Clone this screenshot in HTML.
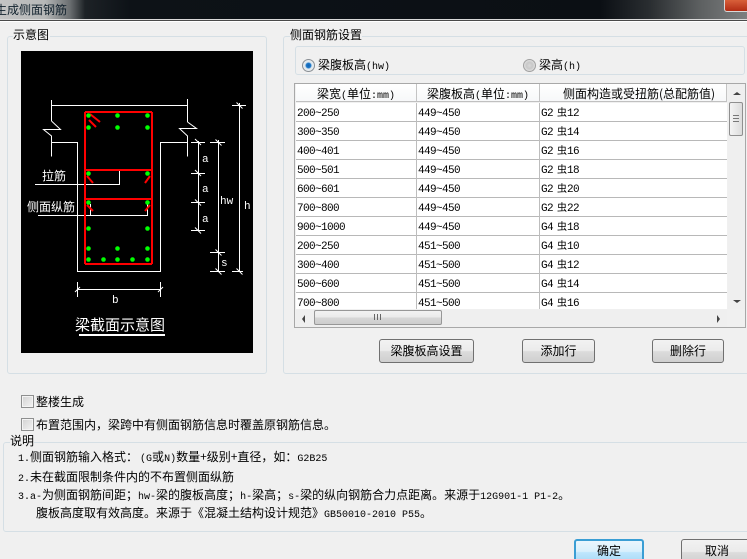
<!DOCTYPE html>
<html lang="zh">
<head>
<meta charset="utf-8">
<style>
html,body{margin:0;padding:0;width:747px;height:559px;overflow:hidden;}
body{position:relative;background:#f0f0f0;color:#000;
font:12px/14px "WenQuanYi Zen Hei","Noto Sans CJK SC",sans-serif;}
div,span{position:absolute;box-sizing:border-box;white-space:nowrap;}
.m{font-family:"Liberation Mono","WenQuanYi Zen Hei",monospace;font-size:10px;}
.g{border:1px solid #d5dfe5;border-radius:3px;}
.lab{background:#f0f0f0;height:14px;}
.h{top:84px;height:18px;line-height:19px;text-align:center;background:linear-gradient(#fff,#f7f8f9);border-right:1px solid #c4c4c4;border-bottom:1px solid #c0c0c0;}
.row{left:296px;width:431px;height:19px;border-bottom:1px solid #b8b8b8;background:#fff;font-size:11px;letter-spacing:-.6px;}
.c{top:3px;height:16px;line-height:16px;}
.c1{left:1px}.c2{left:122px}.c3{left:245px}
.y{position:static;font-size:10px;letter-spacing:0;margin-left:4px;margin-right:0;}
.v{top:0;width:1px;height:19px;background:#bdbdbd;}
.btn{border:1px solid #707070;border-radius:3px;text-align:center;line-height:21px;height:24px;background:linear-gradient(#f2f2f2 0,#ebebeb 48%,#dcdcdc 52%,#cfcfcf 100%);font-size:12px;}
.cb{width:13px;height:13px;border:1px solid #8e8f8f;background:linear-gradient(135deg,#d2d2d2,#f4f4f4);box-shadow:inset 0 0 0 1px #f4f4f4;}
svg text{font-family:"Liberation Mono",monospace;fill:#fff;}
</style>
</head>
<body>
<div style="left:0;top:0;width:747px;height:19px;background:linear-gradient(90deg,#c4c4c4 0,#b5b7b7 45px,#6a6e70 70px,#1d2226 85px,#0d1217 130px,#0b0f14 600px,#2a2e31 650px,#5d6061 700px,#7d7f80 747px);"></div>
<div style="left:-5px;top:2px;height:16px;line-height:16px;font-size:12px;color:#10202c;">生成侧面钢筋</div>
<div style="left:724px;top:0;width:23px;height:12px;background:linear-gradient(#d8603a,#b22c14);border:1px solid #d8d8d8;border-top:0;border-right:0;border-radius:0 0 0 3px;"></div>
<div style="left:0;top:19px;width:747px;height:1px;background:#d9d9d9;"></div>
<div style="left:0;top:20px;width:747px;height:1px;background:#4a4a4a;"></div>
<div style="left:0;top:21px;width:747px;height:1px;background:#fff;"></div>

<!-- left group -->
<div class="g" style="left:7px;top:36px;width:260px;height:338px;"></div>
<div class="lab" style="left:13px;top:28px;width:37px;">示意图</div>
<div style="left:21px;top:51px;width:232px;height:302px;background:#000;"></div>
<svg style="position:absolute;left:0;top:0" width="747" height="559" viewBox="0 0 747 559" shape-rendering="crispEdges">
<g fill="none" stroke="#fff" stroke-width="1">
<path d="M51.5 100V121"/><path d="M52 105.500H187.500"/><path d="M187.500 99V122"/>
<path shape-rendering="auto" d="M51.500 121L60.500 129.500H43.500L51.500 136V156.500"/>
<path shape-rendering="auto" d="M187.500 122L196.500 128.500H179.500L187.500 136V156.500"/>
<path d="M51.500 142.500H77.500V271.500H160.500V142.500H187.500"/>
<path d="M35 184.500H119.500V170"/>
<path d="M38 215.500H147.500V204"/><path d="M90.500 204V215"/>
<path d="M198.500 141V231"/>
<path d="M191 142.500H205M191 173.500H205M191 202.500H205M191 230.500H205"/>
<path d="M218.500 140V272"/><path d="M210 142.500H225M210 252.500H225M210 271.500H225"/>
<path d="M239.500 103V272"/><path d="M232 105.500H246M232 271.500H243"/>
<path d="M77.500 282V297M160.500 282V297M77 289.500H161"/>
<path shape-rendering="auto" d="M195 139L201 145M195 170L201 176M195 199.500L201 205.500M195 227.500L201 233.500M215.500 139.500L221.500 145.500M215.500 249.500L221.500 255.500M215.500 268.500L221.500 274.500M236.500 102.500L242.500 108.500M236.500 268.500L242.500 274.500M75 292L80 287M158 292L163 287"/>
</g>
<rect x="79" y="334" width="86" height="2" fill="#fff"/>
<g fill="none" stroke="#f00" stroke-width="2">
<path d="M85 112H152M85 112V264M152 112V264M85 264H152M85 170H152M85 199H152"/>
<path shape-rendering="auto" d="M90 114L100 122M89 120L96 127M87 176L93 183M150 176L145 183M87 205L93 211M150 205L145 211"/>
</g>
<g fill="#0f0" shape-rendering="auto">
<circle cx="88.500" cy="115.500" r="2.300"/><circle cx="117.500" cy="115.500" r="2.300"/><circle cx="147.500" cy="115.500" r="2.300"/>
<circle cx="88.500" cy="127.500" r="2.300"/><circle cx="117.500" cy="127.500" r="2.300"/><circle cx="147.500" cy="127.500" r="2.300"/>
<circle cx="88.500" cy="173.500" r="2.300"/><circle cx="147.500" cy="173.500" r="2.300"/>
<circle cx="88.500" cy="202.500" r="2.300"/><circle cx="147.500" cy="202.500" r="2.300"/>
<circle cx="88.500" cy="228.500" r="2.300"/><circle cx="147.500" cy="228.500" r="2.300"/>
<circle cx="88.500" cy="248.500" r="2.300"/><circle cx="117.500" cy="248.500" r="2.300"/><circle cx="147.500" cy="248.500" r="2.300"/>
<circle cx="88.500" cy="259.500" r="2.300"/><circle cx="103.500" cy="259.500" r="2.300"/><circle cx="117.500" cy="259.500" r="2.300"/><circle cx="132.500" cy="259.500" r="2.300"/><circle cx="147.500" cy="259.500" r="2.300"/>
</g>
<g font-size="11">
<text x="202" y="162">a</text><text x="202" y="192">a</text><text x="202" y="222">a</text>
<text x="220" y="204">hw</text><text x="244" y="209">h</text><text x="221" y="266">s</text><text x="112" y="303">b</text>
</g>
<g>
<text x="42" y="180" font-size="12" style="font-family:'WenQuanYi Zen Hei','Noto Sans CJK SC',sans-serif">拉筋</text>
<text x="27" y="211" font-size="12" style="font-family:'WenQuanYi Zen Hei','Noto Sans CJK SC',sans-serif">侧面纵筋</text>
<text x="75" y="330" font-size="15" style="font-family:'WenQuanYi Zen Hei','Noto Sans CJK SC',sans-serif">梁截面示意图</text>
</g>
</svg>

<!-- right group -->
<div class="g" style="left:283px;top:36px;width:470px;height:338px;"></div>
<div class="lab" style="left:290px;top:28px;width:72px;">侧面钢筋设置</div>
<div class="g" style="left:295px;top:46px;width:450px;height:29px;"></div>
<div style="left:302px;top:59px;width:13px;height:13px;border-radius:50%;border:1px solid #8a8f94;background:radial-gradient(circle,#1060b0 0,#1d78c8 30%,#dfe8ee 45%,#f0f0f0 100%);"></div>
<div style="left:318px;top:58px;">梁腹板高<span class="m" style="position:static;">(hw)</span></div>
<div style="left:523px;top:59px;width:13px;height:13px;border-radius:50%;border:1px solid #a0a0a0;background:radial-gradient(circle,#d8d8d8 0,#c8c8c8 40%,#f4f4f4 100%);"></div>
<div style="left:539px;top:58px;">梁高<span class="m" style="position:static;">(h)</span></div>

<div style="left:294px;top:83px;width:452px;height:245px;border:1px solid #a8a8a8;background:#f0f0f0;"></div>
<div class="h" style="left:296px;width:121px;">梁宽<span class="m" style="position:static;">(</span>单位<span class="m" style="position:static;">:mm)</span></div>
<div class="h" style="left:417px;width:123px;">梁腹板高<span class="m" style="position:static;">(</span>单位<span class="m" style="position:static;">:mm)</span></div>
<div class="h" style="left:540px;width:187px;text-align:left;padding-left:23px;">侧面构造或受扭筋(总配筋值)</div>

<div class="row m" style="top:103px;"><span class="c c1">200~250</span><span class="c c2">449~450</span><span class="c c3">G2<span class="y">虫</span>12</span><i class="v" style="position:absolute;left:120px"></i><i class="v" style="position:absolute;left:243px"></i></div>
<div class="row m" style="top:122px;"><span class="c c1">300~350</span><span class="c c2">449~450</span><span class="c c3">G2<span class="y">虫</span>14</span><i class="v" style="position:absolute;left:120px"></i><i class="v" style="position:absolute;left:243px"></i></div>
<div class="row m" style="top:141px;"><span class="c c1">400~401</span><span class="c c2">449~450</span><span class="c c3">G2<span class="y">虫</span>16</span><i class="v" style="position:absolute;left:120px"></i><i class="v" style="position:absolute;left:243px"></i></div>
<div class="row m" style="top:160px;"><span class="c c1">500~501</span><span class="c c2">449~450</span><span class="c c3">G2<span class="y">虫</span>18</span><i class="v" style="position:absolute;left:120px"></i><i class="v" style="position:absolute;left:243px"></i></div>
<div class="row m" style="top:179px;"><span class="c c1">600~601</span><span class="c c2">449~450</span><span class="c c3">G2<span class="y">虫</span>20</span><i class="v" style="position:absolute;left:120px"></i><i class="v" style="position:absolute;left:243px"></i></div>
<div class="row m" style="top:198px;"><span class="c c1">700~800</span><span class="c c2">449~450</span><span class="c c3">G2<span class="y">虫</span>22</span><i class="v" style="position:absolute;left:120px"></i><i class="v" style="position:absolute;left:243px"></i></div>
<div class="row m" style="top:217px;"><span class="c c1">900~1000</span><span class="c c2">449~450</span><span class="c c3">G4<span class="y">虫</span>18</span><i class="v" style="position:absolute;left:120px"></i><i class="v" style="position:absolute;left:243px"></i></div>
<div class="row m" style="top:236px;"><span class="c c1">200~250</span><span class="c c2">451~500</span><span class="c c3">G4<span class="y">虫</span>10</span><i class="v" style="position:absolute;left:120px"></i><i class="v" style="position:absolute;left:243px"></i></div>
<div class="row m" style="top:255px;"><span class="c c1">300~400</span><span class="c c2">451~500</span><span class="c c3">G4<span class="y">虫</span>12</span><i class="v" style="position:absolute;left:120px"></i><i class="v" style="position:absolute;left:243px"></i></div>
<div class="row m" style="top:274px;"><span class="c c1">500~600</span><span class="c c2">451~500</span><span class="c c3">G4<span class="y">虫</span>14</span><i class="v" style="position:absolute;left:120px"></i><i class="v" style="position:absolute;left:243px"></i></div>
<div class="row m" style="top:293px;height:16px;border-bottom:0;"><span class="c c1">700~800</span><span class="c c2">451~500</span><span class="c c3">G4<span class="y">虫</span>16</span><i class="v" style="position:absolute;left:120px;height:16px"></i><i class="v" style="position:absolute;left:243px;height:16px"></i></div>

<!-- vertical scrollbar -->
<div style="left:728px;top:84px;width:17px;height:225px;background:#efefef;"></div>
<div style="left:733px;top:92px;width:0;height:0;border:4px solid transparent;border-top:0;border-bottom:3px solid #444;"></div>
<div style="left:733px;top:300px;width:0;height:0;border:4px solid transparent;border-bottom:0;border-top:3px solid #444;"></div>
<div style="left:729px;top:102px;width:14px;height:34px;border:1px solid #8f8f8f;border-radius:2px;background:linear-gradient(90deg,#f4f4f4,#dcdcdc);"></div>
<div style="left:733px;top:115px;width:6px;height:7px;border-top:1px solid #777;border-bottom:1px solid #777;"></div>
<div style="left:733px;top:118px;width:6px;height:1px;background:#777;"></div>
<!-- horizontal scrollbar -->
<div style="left:296px;top:310px;width:431px;height:17px;background:#efefef;"></div>
<div style="left:302px;top:315px;width:0;height:0;border:4px solid transparent;border-left:0;border-right:3px solid #444;"></div>
<div style="left:717px;top:315px;width:0;height:0;border:4px solid transparent;border-right:0;border-left:3px solid #444;"></div>
<div style="left:314px;top:310px;width:128px;height:15px;border:1px solid #979797;border-radius:2px;background:linear-gradient(#f2f2f2,#ebebeb 45%,#d6d6d6 55%,#cdcdcd);"></div>
<div style="left:374px;top:314px;width:7px;height:6px;border-left:1px solid #666;border-right:1px solid #666;"></div>
<div style="left:377px;top:314px;width:1px;height:6px;background:#666;"></div>

<div class="btn" style="left:379px;top:339px;width:95px;">梁腹板高设置</div>
<div class="btn" style="left:522px;top:339px;width:73px;">添加行</div>
<div class="btn" style="left:652px;top:339px;width:72px;">删除行</div>

<div class="cb" style="left:21px;top:395px;"></div>
<div style="left:36px;top:395px;">整楼生成</div>
<div class="cb" style="left:21px;top:418px;"></div>
<div style="left:36px;top:418px;">布置范围内，梁跨中有侧面钢筋信息时覆盖原钢筋信息。</div>

<div class="g" style="left:3px;top:442px;width:760px;height:90px;"></div>
<div class="lab" style="left:10px;top:434px;width:24px;">说明</div>
<div style="left:18px;top:450px;"><span class="m" style="position:static;">1.</span>侧面钢筋输入格式：<span class="m" style="position:static;margin-left:2px;">(G</span>或<span class="m" style="position:static;">N)</span>数量+级别+直径，如：<span class="m" style="position:static;">G2B25</span></div>
<div style="left:18px;top:470px;"><span class="m" style="position:static;">2.</span>未在截面限制条件内的不布置侧面纵筋</div>
<div style="left:18px;top:488px;"><span class="m" style="position:static;">3.a-</span>为侧面钢筋间距；<span class="m" style="position:static;">hw-</span>梁的腹板高度；<span class="m" style="position:static;">h-</span>梁高；<span class="m" style="position:static;">s-</span>梁的纵向钢筋合力点距离。来源于<span class="m" style="position:static;">12G901-1 P1-2</span>。</div>
<div style="left:36px;top:506px;">腹板高度取有效高度。来源于《混凝土结构设计规范》<span class="m" style="position:static;">GB50010-2010 P55</span>。</div>

<div class="btn" style="left:574px;top:539px;width:70px;height:26px;border:2px solid #3a9ed4;background:linear-gradient(#eaf6fd,#d9f0fc 48%,#bee6fd 52%,#a7d9f5);line-height:20px;">确定</div>
<div class="btn" style="left:681px;top:539px;width:70px;height:26px;line-height:22px;text-align:left;padding-left:23px;">取消</div>
</body>
</html>
